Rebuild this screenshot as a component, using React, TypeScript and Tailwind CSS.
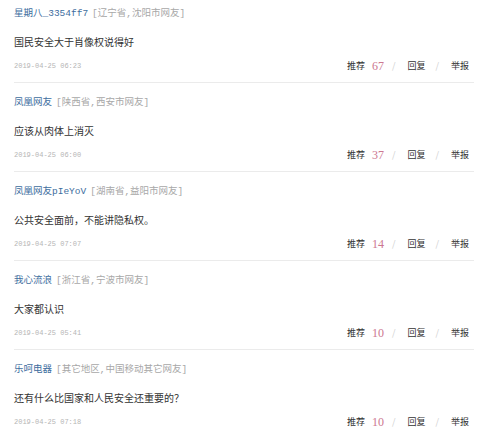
const comments = [
    { name: '星期八_3354ff7', loc: '[辽宁省,沈阳市网友]', text: '国民安全大于肖像权说得好', time: '2019-04-25 06:23', likes: 67 },
    { name: '凤凰网友', loc: '[陕西省,西安市网友]', text: '应该从肉体上消灭', time: '2019-04-25 06:00', likes: 37 },
    { name: '凤凰网友pIeYoV', loc: '[湖南省,益阳市网友]', text: '公共安全面前，不能讲隐私权。', time: '2019-04-25 07:07', likes: 14 },
    { name: '我心流浪', loc: '[浙江省,宁波市网友]', text: '大家都认识', time: '2019-04-25 05:41', likes: 10 },
    { name: '乐呵电器', loc: '[其它地区,中国移动其它网友]', text: '还有什么比国家和人民安全还重要的？', time: '2019-04-25 07:18', likes: 10 },
];

const mono = 'font-["Liberation_Mono","Noto_Sans_CJK_SC",monospace]';

const App = () => {
    return (
        <div className="w-[500px] h-[430px] overflow-hidden bg-white">
            <div className="-mt-[6px]">
                {comments.map((c, i) => (
                    <div key={i} className="ml-[14px] mr-[26px] pt-[12px] pb-[10px] border-b border-[#ebebeb]">
                        <div className={`${mono} text-[9.5px] leading-[16px] whitespace-nowrap`}>
                            <span className="text-[#3d6d9e]">{c.name}</span>
                            <span className="text-[#a8a8a8] ml-[4px]">{c.loc}</span>
                        </div>
                        <div className='mt-[12px] text-[10px] leading-[16px] text-[#333] font-["Noto_Sans_CJK_SC",sans-serif]'>
                            {c.text}
                        </div>
                        <div className="mt-[10px] h-[12px] flex items-center justify-between">
                            <span className={`${mono} text-[7px] text-[#b5b5b5]`}>{c.time}</span>
                            <div className='flex items-center pr-[5px] text-[9px] text-[#333] font-["Noto_Sans_CJK_SC",sans-serif]'>
                                <span>推荐</span>
                                <span className='ml-[7px] text-[12px] text-[#cc7790] font-["Liberation_Serif",serif]'>{c.likes}</span>
                                <span className="ml-[8px] mr-[12px] text-[#cfcfcf]">/</span>
                                <span>回复</span>
                                <span className="ml-[10px] mr-[12px] text-[#cfcfcf]">/</span>
                                <span>举报</span>
                            </div>
                        </div>
                    </div>
                ))}
            </div>
        </div>
    );
};

export default App;
